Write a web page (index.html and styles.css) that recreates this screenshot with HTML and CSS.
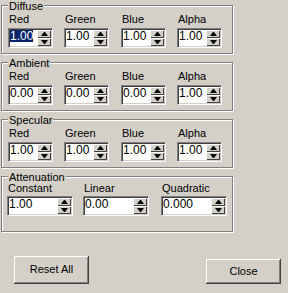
FILE: index.html
```html
<!DOCTYPE html>
<html lang="en">
<head>
    <meta charset="UTF-8">
    <title>Material</title>
    <link rel="stylesheet" href="styles.css">
</head>
<body>
<div class="dialog">

    <div class="group">
        <span class="group-title">Diffuse</span>
        <div class="row">
            <div class="cell">
                <span class="field-label">Red</span>
                <div class="spin"><span class="spin-value"><span class="sel">1.00</span></span><span class="spin-buttons"><span class="spin-up"></span><span class="spin-down"></span></span></div>
            </div>
            <div class="cell">
                <span class="field-label">Green</span>
                <div class="spin"><span class="spin-value">1.00</span><span class="spin-buttons"><span class="spin-up"></span><span class="spin-down"></span></span></div>
            </div>
            <div class="cell">
                <span class="field-label">Blue</span>
                <div class="spin"><span class="spin-value">1.00</span><span class="spin-buttons"><span class="spin-up"></span><span class="spin-down"></span></span></div>
            </div>
            <div class="cell">
                <span class="field-label">Alpha</span>
                <div class="spin"><span class="spin-value">1.00</span><span class="spin-buttons"><span class="spin-up"></span><span class="spin-down"></span></span></div>
            </div>
        </div>
    </div>

    <div class="group">
        <span class="group-title">Ambient</span>
        <div class="row">
            <div class="cell">
                <span class="field-label">Red</span>
                <div class="spin"><span class="spin-value">0.00</span><span class="spin-buttons"><span class="spin-up"></span><span class="spin-down"></span></span></div>
            </div>
            <div class="cell">
                <span class="field-label">Green</span>
                <div class="spin"><span class="spin-value">0.00</span><span class="spin-buttons"><span class="spin-up"></span><span class="spin-down"></span></span></div>
            </div>
            <div class="cell">
                <span class="field-label">Blue</span>
                <div class="spin"><span class="spin-value">0.00</span><span class="spin-buttons"><span class="spin-up"></span><span class="spin-down"></span></span></div>
            </div>
            <div class="cell">
                <span class="field-label">Alpha</span>
                <div class="spin"><span class="spin-value">1.00</span><span class="spin-buttons"><span class="spin-up"></span><span class="spin-down"></span></span></div>
            </div>
        </div>
    </div>

    <div class="group">
        <span class="group-title">Specular</span>
        <div class="row">
            <div class="cell">
                <span class="field-label">Red</span>
                <div class="spin"><span class="spin-value">1.00</span><span class="spin-buttons"><span class="spin-up"></span><span class="spin-down"></span></span></div>
            </div>
            <div class="cell">
                <span class="field-label">Green</span>
                <div class="spin"><span class="spin-value">1.00</span><span class="spin-buttons"><span class="spin-up"></span><span class="spin-down"></span></span></div>
            </div>
            <div class="cell">
                <span class="field-label">Blue</span>
                <div class="spin"><span class="spin-value">1.00</span><span class="spin-buttons"><span class="spin-up"></span><span class="spin-down"></span></span></div>
            </div>
            <div class="cell">
                <span class="field-label">Alpha</span>
                <div class="spin"><span class="spin-value">1.00</span><span class="spin-buttons"><span class="spin-up"></span><span class="spin-down"></span></span></div>
            </div>
        </div>
    </div>

    <div class="group group-wide">
        <span class="group-title">Attenuation</span>
        <div class="row row-wide">
            <div class="cell">
                <span class="field-label">Constant</span>
                <div class="spin spin-wide"><span class="spin-value">1.00</span><span class="spin-buttons"><span class="spin-up"></span><span class="spin-down"></span></span></div>
            </div>
            <div class="cell">
                <span class="field-label">Linear</span>
                <div class="spin spin-wide"><span class="spin-value">0.00</span><span class="spin-buttons"><span class="spin-up"></span><span class="spin-down"></span></span></div>
            </div>
            <div class="cell">
                <span class="field-label">Quadratic</span>
                <div class="spin spin-wide"><span class="spin-value">0.000</span><span class="spin-buttons"><span class="spin-up"></span><span class="spin-down"></span></span></div>
            </div>
        </div>
    </div>

    <div class="footer">
        <button type="button" class="btn btn-reset">Reset All</button>
        <button type="button" class="btn btn-close">Close</button>
    </div>

</div>
</body>
</html>
```

FILE: styles.css
```css
body {
    margin: 0;
    background-color: #d4d0c8;
    color: #000;
    font-family: "Liberation Sans", Arial, sans-serif;
    font-size: 11px;
}

.dialog {
    width: 288px;
    height: 293px;
    padding-top: 5px;
    box-sizing: border-box;
}

/* etched group box */
.group {
    position: relative;
    width: 232px;
    height: 49px;
    margin: 0 0 8px 1px;
    padding: 7px 0 0 6px;
    box-sizing: border-box;
    border: 1px solid #808080;
    box-shadow: inset 1px 1px #fff, 1px 1px #fff;
}

.group-wide {
    height: 56px;
    margin-bottom: 0;
    padding: 5px 0 0 5px;
}

.group-title {
    position: absolute;
    top: -6px;
    left: 6px;
    padding: 0 1px;
    line-height: 13px;
    background-color: #d4d0c8;
}

.row {
    display: grid;
    grid-template-columns: 56px 57px 56px 45px;
}

.row-wide {
    grid-template-columns: 76px 78px 66px;
}

.field-label {
    display: block;
    line-height: 13px;
    padding-left: 1px;
    margin-bottom: 2px;
}

.row-wide .field-label {
    margin-bottom: 1px;
}

/* sunken edit with up/down buttons */
.spin {
    display: flex;
    width: 45px;
    height: 20px;
    padding: 1px;
    box-sizing: border-box;
    background-color: #fff;
    border: 1px solid;
    border-color: #808080 #fff #fff #808080;
    box-shadow: inset 1px 1px #404040, inset -1px -1px #d4d0c8;
}

.spin-wide {
    width: 66px;
}

.spin-value {
    flex: 1;
    font-size: 12px;
    line-height: 13px;
}

.sel {
    display: inline-block;
    line-height: 12px;
    background-color: #0a246a;
    color: #fff;
}

.spin-buttons {
    display: flex;
    flex-direction: column;
    width: 14px;
}

.spin-up, .spin-down {
    flex: 1;
    display: flex;
    align-items: center;
    justify-content: center;
    background-color: #d4d0c8;
    box-shadow: inset 1px 1px #fff, inset -1px -1px #404040;
}

.spin-up::after, .spin-down::after {
    content: "";
    display: block;
    width: 1px;
    border-style: solid;
}

.spin-up::after {
    border-width: 0 3px 4px;
    border-color: transparent transparent #000;
}

.spin-down::after {
    border-width: 4px 3px 0;
    border-color: #000 transparent transparent;
}

.footer {
    display: flex;
    justify-content: space-between;
    align-items: flex-end;
    margin-top: 24px;
    padding: 0 7px 0 14px;
}

.btn {
    width: 75px;
    padding: 0 0 2px;
    border: none;
    background-color: #d4d0c8;
    color: #000;
    font-family: inherit;
    font-size: 11px;
    box-shadow: inset -1px -1px #404040, inset 1px 1px #fff, inset -2px -2px #808080;
}

.btn-reset {
    height: 28px;
}

.btn-close {
    height: 25px;
}
```
